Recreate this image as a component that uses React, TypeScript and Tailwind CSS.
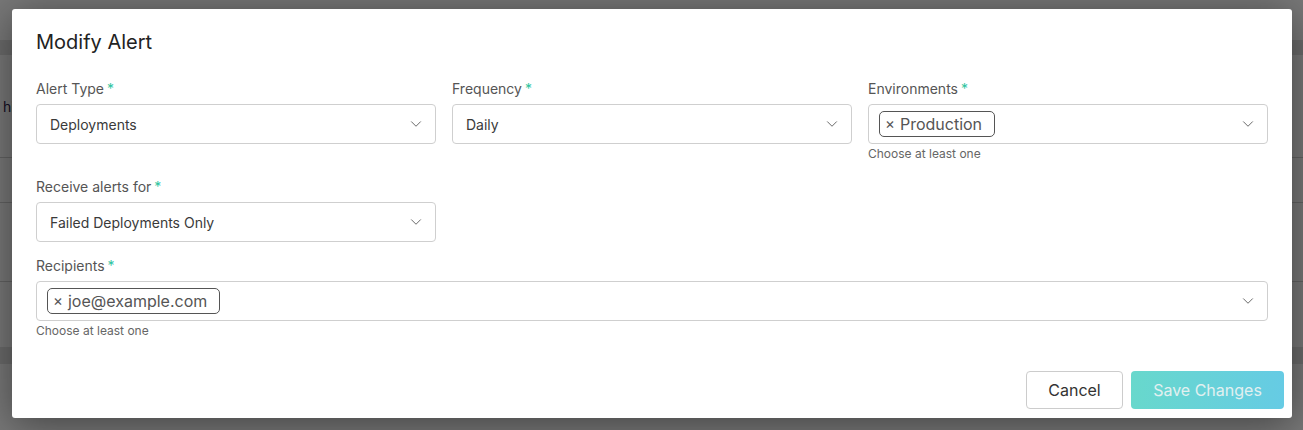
import { ChevronDown } from "lucide-react"

const font = { fontFamily: "Inter, 'Noto Sans', sans-serif" }

function Label({ text }: { text: string }) {
  return (
    <div className="h-5 text-[14px] leading-5 text-[#555]">
      {text}
      <span className="ml-[3px] text-[#2ec4a0]">*</span>
    </div>
  )
}

function Select({ value }: { value: string }) {
  return (
    <div className="mt-[5px] flex h-10 items-center justify-between rounded-[4px] border border-[#cfcfcf] bg-white pl-[13px] pr-[10px]">
      <span className="text-[14px] text-[#3a3a3a]">{value}</span>
      <ChevronDown className="h-[18px] w-[18px] text-[#666]" strokeWidth={1.3} />
    </div>
  )
}

function MultiSelect({ chip }: { chip: string }) {
  return (
    <div className="mt-[5px] flex h-10 items-center justify-between rounded-[4px] border border-[#cfcfcf] bg-white pl-[10px] pr-[10px]">
      <span className="flex h-[26px] items-center rounded-[5px] border border-[#555] pl-[5px] pr-[12px] text-[16px] text-[#555]">
        <span className="mr-[5px] text-[15px]">×</span>
        {chip}
      </span>
      <ChevronDown className="h-[18px] w-[18px] text-[#666]" strokeWidth={1.3} />
    </div>
  )
}

function Hint() {
  return <div className="mt-[2px] h-4 text-[12px] leading-4 text-[#666]">Choose at least one</div>
}

export default function App() {
  return (
    <div className="relative h-[430px] w-[1303px] overflow-hidden bg-white" style={font}>
      {/* page behind the modal */}
      <div className="flex flex-col">
        <div className="h-10" />
        <div className="h-[15px] bg-[#e4e4e4]" />
        <div className="flex h-[103px] items-center border-b border-[#d0d0d0] pl-[3px]">
          <span className="text-[14px] text-[#2a1a4a]">hi</span>
        </div>
        <div className="h-[45px] border-b border-[#d0d0d0]" />
        <div className="h-[79px] border-b border-[#d0d0d0]" />
        <div className="h-[65px]" />
        <div className="h-[17px] bg-[#e4e4e4]" />
      </div>
      <div className="absolute inset-0 bg-black/[0.53]" />

      {/* modal */}
      <div className="absolute left-3 top-[9px] h-[409px] w-[1280px] rounded-[3px] bg-white shadow-[0_6px_40px_rgba(0,0,0,0.45)]">
        <div className="px-6 pt-[19px]">
          <h2 className="text-[20px] leading-[28px] text-[#222]">Modify Alert</h2>
          <div className="mt-[23px] grid grid-cols-3 gap-x-4">
            <div>
              <Label text="Alert Type" />
              <Select value="Deployments" />
            </div>
            <div>
              <Label text="Frequency" />
              <Select value="Daily" />
            </div>
            <div>
              <Label text="Environments" />
              <MultiSelect chip="Production" />
              <Hint />
            </div>
          </div>
          <div className="mt-[15px] grid grid-cols-3 gap-x-4">
            <div>
              <Label text="Receive alerts for" />
              <Select value="Failed Deployments Only" />
            </div>
          </div>
          <div className="mt-[14px]">
            <Label text="Recipients" />
            <MultiSelect chip="joe@example.com" />
            <Hint />
          </div>
        </div>
        <div className="mt-[32px] flex justify-end gap-2 pr-2">
          <button className="h-[38px] w-[97px] rounded-[4px] border border-[#ccc] bg-white text-[16px] text-[#333]">
            Cancel
          </button>
          <button className="h-[38px] w-[153px] rounded-[4px] bg-gradient-to-r from-[#68d8cc] to-[#66cbe4] text-[16px] text-[#e2f0f0]">
            Save Changes
          </button>
        </div>
      </div>
    </div>
  )
}
